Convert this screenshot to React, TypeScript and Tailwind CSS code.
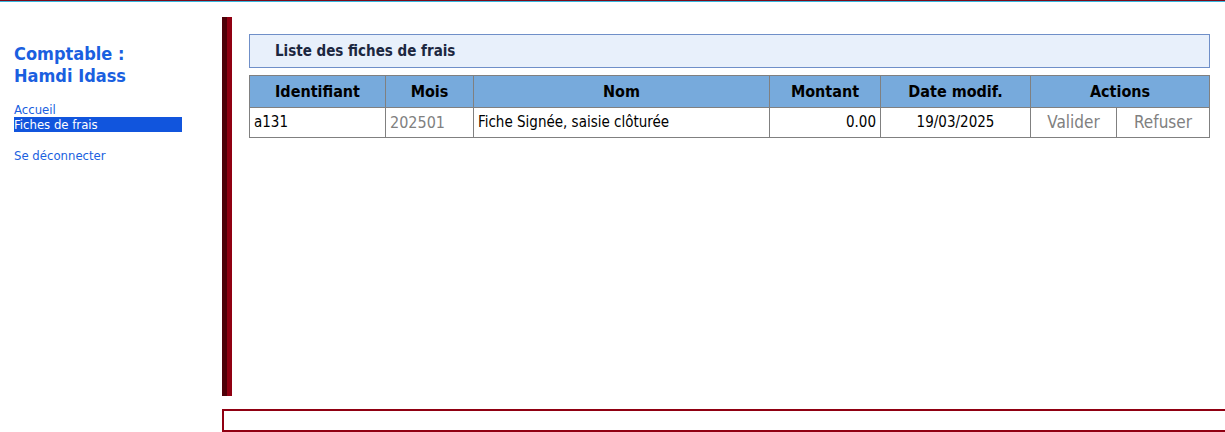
import React from "react";

const font = { fontFamily: "'DejaVu Sans Condensed', 'DejaVu Sans', sans-serif" };

const cell = "border border-[#808080] px-1";

export default function App() {
  return (
    <div className="w-[1225px] h-[432px] overflow-hidden bg-white" style={font}>
      <div className="h-px bg-[#7a0a1a]" />
      <div className="h-px bg-[#38b6de]" />

      <div className="flex h-[379px] mt-[15px]">
        <aside className="w-[222px] shrink-0 pl-[14px] pt-[26px]">
          <h2 className="text-[18px] leading-[22px] font-bold text-[#1a5fe0]">
            Comptable :<br />Hamdi Idass
          </h2>
          <ul className="mt-[15px] text-[13px] leading-[15px] text-[#1a5fe0]">
            <li>Accueil</li>
            <li className="w-[168px] bg-[#1155dd] text-white">Fiches de frais</li>
          </ul>
          <div className="mt-[16px] text-[13px] leading-[15px] text-[#1a5fe0]">Se déconnecter</div>
        </aside>

        <div className="flex-1 border-l-[5px] border-[#4e0008]">
          <main className="h-full border-l-[5px] border-[#900012] pl-[17px] pr-[15px] pt-[17px]">
            <div className="h-[34px] border border-[#6f8fc8] bg-[#e8f0fb] pl-[25px] flex items-center">
              <h3 className="text-[15px] font-bold text-[#1c2740]">Liste des fiches de frais</h3>
            </div>

            <table className="mt-[7px] w-full border-collapse text-[15px] text-black">
              <thead>
                <tr className="h-[32px] bg-[#77aadc] text-[16px] font-bold">
                  <th className={`${cell} w-[136px]`}>Identifiant</th>
                  <th className={`${cell} w-[88px]`}>Mois</th>
                  <th className={`${cell} w-[296px]`}>Nom</th>
                  <th className={`${cell} w-[111px]`}>Montant</th>
                  <th className={`${cell} w-[150px]`}>Date modif.</th>
                  <th className={cell} colSpan={2}>Actions</th>
                </tr>
              </thead>
              <tbody>
                <tr className="h-[30px]">
                  <td className={cell}>a131</td>
                  <td className={`${cell} text-[16px] text-[#808080]`}>202501</td>
                  <td className={cell}>Fiche Signée, saisie clôturée</td>
                  <td className={`${cell} text-right`}>0.00</td>
                  <td className={`${cell} text-center`}>19/03/2025</td>
                  <td className={`${cell} w-[86px] text-center text-[17px] text-[#808080]`}>Valider</td>
                  <td className={`${cell} text-center text-[17px] text-[#808080]`}>Refuser</td>
                </tr>
              </tbody>
            </table>
          </main>
        </div>
      </div>

      <div className="ml-[222px] mt-[13px] h-[23px] border-2 border-r-0 border-[#900012]" />
    </div>
  );
}
